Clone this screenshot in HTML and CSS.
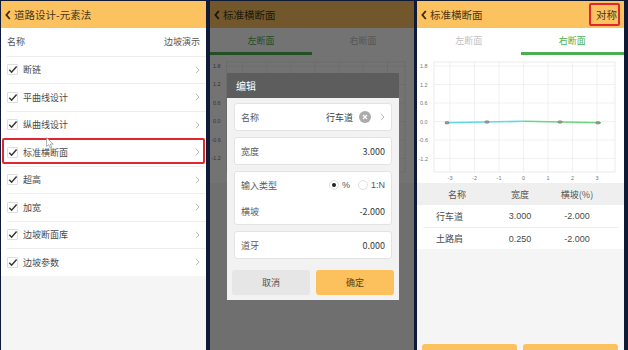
FILE: index.html
```html
<!DOCTYPE html>
<html lang="zh-CN">
<head>
<meta charset="utf-8">
<title>标准横断面</title>
<link rel="stylesheet" href="styles.css">
</head>
<body>
<main class="screens">
  <!-- Screen 1 -->
  <section class="panel p1">
    <header class="bar">
      <svg class="back" viewBox="0 0 6 10"><path d="M4.8 1 L1.4 5 L4.8 9"/></svg>
      <span>道路设计-元素法</span>
    </header>
    <ul class="list">
      <li class="row head"><span>名称</span><span>边坡演示</span></li>
      <li class="row item"><span class="cb"><svg viewBox="0 0 11 11"><path d="M2.3 5.8 L4.6 8.2 L9.6 2.4"/></svg></span><span class="lbl">断链</span><svg class="chev" viewBox="0 0 5 8"><path d="M1 0.8 L4 4 L1 7.2"/></svg></li>
      <li class="row item"><span class="cb"><svg viewBox="0 0 11 11"><path d="M2.3 5.8 L4.6 8.2 L9.6 2.4"/></svg></span><span class="lbl">平曲线设计</span><svg class="chev" viewBox="0 0 5 8"><path d="M1 0.8 L4 4 L1 7.2"/></svg></li>
      <li class="row item"><span class="cb"><svg viewBox="0 0 11 11"><path d="M2.3 5.8 L4.6 8.2 L9.6 2.4"/></svg></span><span class="lbl">纵曲线设计</span><svg class="chev" viewBox="0 0 5 8"><path d="M1 0.8 L4 4 L1 7.2"/></svg></li>
      <li class="row item hl"><span class="cb"><svg viewBox="0 0 11 11"><path d="M2.3 5.8 L4.6 8.2 L9.6 2.4"/></svg></span><span class="lbl">标准横断面</span><svg class="chev" viewBox="0 0 5 8"><path d="M1 0.8 L4 4 L1 7.2"/></svg></li>
      <li class="row item"><span class="cb"><svg viewBox="0 0 11 11"><path d="M2.3 5.8 L4.6 8.2 L9.6 2.4"/></svg></span><span class="lbl">超高</span><svg class="chev" viewBox="0 0 5 8"><path d="M1 0.8 L4 4 L1 7.2"/></svg></li>
      <li class="row item"><span class="cb"><svg viewBox="0 0 11 11"><path d="M2.3 5.8 L4.6 8.2 L9.6 2.4"/></svg></span><span class="lbl">加宽</span><svg class="chev" viewBox="0 0 5 8"><path d="M1 0.8 L4 4 L1 7.2"/></svg></li>
      <li class="row item"><span class="cb"><svg viewBox="0 0 11 11"><path d="M2.3 5.8 L4.6 8.2 L9.6 2.4"/></svg></span><span class="lbl">边坡断面库</span><svg class="chev" viewBox="0 0 5 8"><path d="M1 0.8 L4 4 L1 7.2"/></svg></li>
      <li class="row item"><span class="cb"><svg viewBox="0 0 11 11"><path d="M2.3 5.8 L4.6 8.2 L9.6 2.4"/></svg></span><span class="lbl">边坡参数</span><svg class="chev" viewBox="0 0 5 8"><path d="M1 0.8 L4 4 L1 7.2"/></svg></li>
    </ul>
    <svg class="cursor" viewBox="0 0 8 12"><path d="M0.6 0.6 L0.6 9.6 L2.8 7.6 L4.4 11 L5.8 10.4 L4.3 7.1 L7.2 7.1 Z"/></svg>
  </section>

  <!-- Screen 2 -->
  <section class="panel p2">
    <header class="bar">
      <svg class="back" viewBox="0 0 6 10"><path d="M4.8 1 L1.4 5 L4.8 9"/></svg>
      <span>标准横断面</span>
    </header>
    <div class="tabs"><span class="tab on">左断面</span><span class="tab">右断面</span></div>
    <div class="chart">
      <svg viewBox="0 0 207 127" preserveAspectRatio="none">
        <rect x="17" y="6" width="181" height="110" fill="#fff" stroke="#e3e3e3" stroke-width="0.7"/>
        <g stroke="#e8e8e8" stroke-width="0.6">
          <line x1="17" x2="198" y1="10" y2="10"/><line x1="17" x2="198" y1="28.5" y2="28.5"/><line x1="17" x2="198" y1="47" y2="47"/><line x1="17" x2="198" y1="65.5" y2="65.5"/><line x1="17" x2="198" y1="84" y2="84"/><line x1="17" x2="198" y1="102.5" y2="102.5"/>
          <line x1="33" x2="33" y1="6" y2="116"/><line x1="57.5" x2="57.5" y1="6" y2="116"/><line x1="82" x2="82" y1="6" y2="116"/><line x1="106.5" x2="106.5" y1="6" y2="116"/><line x1="131" x2="131" y1="6" y2="116"/><line x1="155.5" x2="155.5" y1="6" y2="116"/><line x1="180" x2="180" y1="6" y2="116"/>
        </g>
        <g font-size="5.5" fill="#777">
          <text x="3" y="12">1.8</text><text x="3" y="30.5">1.2</text><text x="3" y="49">0.6</text><text x="3" y="67.5">0.0</text><text x="1.5" y="86">-0.6</text><text x="1.5" y="104.5">-1.2</text>
        </g>
      </svg>
    </div>
    <div class="dim"></div>
    <div class="dialog">
      <div class="dlg-title">编辑</div>
      <div class="dlg-body">
        <div class="card">
          <div class="field"><span class="k">名称</span><span class="v">行车道</span>
            <svg class="clear" viewBox="0 0 12 12"><circle cx="6" cy="6" r="6" fill="#ababab"/><path d="M4 4 L8 8 M8 4 L4 8" stroke="#fff" stroke-width="1.2"/></svg>
            <svg class="chev dchev" viewBox="0 0 5 8"><path d="M1 0.8 L4 4 L1 7.2"/></svg>
          </div>
        </div>
        <div class="card"><div class="field"><span class="k">宽度</span><span class="v">3.000</span></div></div>
        <div class="card">
          <div class="field"><span class="k">输入类型</span>
            <span class="radios">
              <span class="radio"><span class="dot on"></span>%</span>
              <span class="radio"><span class="dot"></span>1:N</span>
            </span>
          </div>
          <div class="field"><span class="k">横坡</span><span class="v">-2.000</span></div>
        </div>
        <div class="card"><div class="field"><span class="k">道牙</span><span class="v">0.000</span></div></div>
        <div class="btns"><button class="btn cancel">取消</button><button class="btn ok">确定</button></div>
      </div>
    </div>
  </section>

  <!-- Screen 3 -->
  <section class="panel p3">
    <header class="bar">
      <svg class="back" viewBox="0 0 6 10"><path d="M4.8 1 L1.4 5 L4.8 9"/></svg>
      <span>标准横断面</span>
      <span class="sym">对称</span>
    </header>
    <div class="tabs"><span class="tab off">左断面</span><span class="tab on">右断面</span></div>
    <div class="chart">
      <svg viewBox="0 0 207 127">
        <rect x="17" y="6" width="181" height="110" fill="#fff" stroke="#e3e3e3" stroke-width="0.7"/>
        <g stroke="#e8e8e8" stroke-width="0.6">
          <line x1="17" x2="198" y1="10" y2="10"/><line x1="17" x2="198" y1="28.5" y2="28.5"/><line x1="17" x2="198" y1="47" y2="47"/><line x1="17" x2="198" y1="65.5" y2="65.5"/><line x1="17" x2="198" y1="84" y2="84"/><line x1="17" x2="198" y1="102.5" y2="102.5"/>
          <line x1="33" x2="33" y1="6" y2="116"/><line x1="57.5" x2="57.5" y1="6" y2="116"/><line x1="82" x2="82" y1="6" y2="116"/><line x1="106.5" x2="106.5" y1="6" y2="116"/><line x1="131" x2="131" y1="6" y2="116"/><line x1="155.5" x2="155.5" y1="6" y2="116"/><line x1="180" x2="180" y1="6" y2="116"/>
        </g>
        <g font-size="5.5" fill="#777">
          <text x="3" y="12">1.8</text><text x="3" y="30.5">1.2</text><text x="3" y="49">0.6</text><text x="3" y="67.5">0.0</text><text x="1.5" y="86">-0.6</text><text x="1.5" y="104.5">-1.2</text>
        </g>
        <g font-size="5.5" fill="#777" text-anchor="middle">
          <text x="33" y="124">-3</text><text x="57.5" y="124">-2</text><text x="82" y="124">-1</text><text x="106.5" y="124">0</text><text x="131" y="124">1</text><text x="155.5" y="124">2</text><text x="180" y="124">3</text>
        </g>
        <path d="M28 66.8 L106.5 65.3" stroke="#5fd8ea" stroke-width="1.6" fill="none"/>
        <path d="M106.5 65.3 L184 66.8" stroke="#6fd37f" stroke-width="1.6" fill="none"/>
        <g fill="#9a9a9a" stroke="#666" stroke-width="0.4">
          <rect x="28" y="65.6" width="4" height="2.4" rx="1"/>
          <rect x="68" y="64.8" width="4" height="2.4" rx="1"/>
          <rect x="141" y="64.8" width="4" height="2.4" rx="1"/>
          <rect x="179" y="65.6" width="4" height="2.4" rx="1"/>
        </g>
      </svg>
    </div>
    <div class="table">
      <div class="tr th"><span>名称</span><span>宽度</span><span>横坡(%)</span></div>
      <div class="tr"><span class="nm">行车道</span><span>3.000</span><span>-2.000</span></div>
      <div class="tr sep"><span class="nm">土路肩</span><span>0.250</span><span>-2.000</span></div>
    </div>
    <div class="spacer"></div>
    <div class="foot"><span class="fbtn"></span><span class="fbtn"></span></div>
  </section>
</main>
</body>
</html>
```

FILE: styles.css
```css
* { box-sizing: border-box; margin: 0; padding: 0; }
html, body { width: 628px; height: 350px; overflow: hidden; }
body {
  background: #0f1a36;
  font-family: "Noto Sans CJK SC", "Noto Sans", "Liberation Sans", sans-serif;
  color: #444;
}
.screens {
  display: flex;
  gap: 3px;
  padding: 1px 0 0 1px;
  height: 350px;
}
.panel {
  position: relative;
  display: flex;
  flex-direction: column;
  overflow: hidden;
  background: #f6f5f6;
  height: 349px;
}
.p1 { width: 205px; margin-right: 1px; }
.p2 { width: 204px; }
.p3 { width: 207px; }

/* header bar */
.bar {
  height: 27px;
  flex: none;
  background: #fbc25f;
  display: flex;
  align-items: center;
  gap: 3px;
  padding: 0 5px 0 4px;
  font-size: 10.5px;
  color: #4a3717;
}
.back {
  width: 6px;
  height: 10px;
  fill: none;
  stroke: #3d2c10;
  stroke-width: 1.8;
}
.sym {
  margin-left: auto;
  margin-right: 2px;
  position: relative;
  line-height: 14px;
}
.sym::after {
  content: "";
  position: absolute;
  left: -7px;
  right: -3px;
  top: -5px;
  bottom: -4px;
  border: 2px solid #e0262f;
  border-radius: 2px;
}

/* list (screen 1) */
.list { list-style: none; background: #fff; }
.row {
  height: 27.5px;
  display: flex;
  align-items: center;
  font-size: 9px;
  position: relative;
}
.row.head {
  justify-content: space-between;
  padding: 0 6px;
  color: #555;
}
.row.item {
  margin-left: 6px;
  padding-right: 6px;
  border-top: 1px solid #ededed;
}
.cb {
  width: 11px;
  height: 11px;
  border: 1px solid #dedede;
  border-radius: 1px;
  background: #fff;
  display: flex;
  margin-right: 5px;
}
.cb svg { width: 11px; height: 11px; margin: -1px; fill: none; stroke: #383838; stroke-width: 1.5; }
.lbl { flex: 1; color: #4a4a4a; }
.chev {
  width: 5px;
  height: 8px;
  fill: none;
  stroke: #b8b8b8;
  stroke-width: 1;
}
.row.hl::after {
  content: "";
  position: absolute;
  left: -5px;
  right: 1px;
  top: -1px;
  bottom: 1.5px;
  border: 2px solid #e0262f;
  border-radius: 2px;
}
.cursor {
  position: absolute;
  left: 45px;
  top: 136px;
  width: 8px;
  height: 12px;
  fill: #fff;
  stroke: #8a8a8a;
  stroke-width: 0.7;
}

/* tabs */
.tabs {
  height: 28px;
  flex: none;
  display: flex;
  background: #fff;
  padding-bottom: 1px;
}
.tab {
  flex: 1;
  display: flex;
  align-items: center;
  justify-content: center;
  font-size: 9px;
  color: #c2c2c2;
  border-bottom: 3px solid transparent;
}
.tab.on { color: #4caf50; border-bottom-color: #4caf50; }

/* chart */
.chart { height: 127px; flex: none; background: #fff; }
.chart svg { display: block; width: 100%; height: 127px; font-family: "Liberation Sans", sans-serif; }

/* table */
.table { background: #fff; font-size: 9px; }
.tr {
  height: 22px;
  display: grid;
  grid-template-columns: 80px 46px 68px;
  align-items: center;
  text-align: center;
  color: #4a4a4a;
}
.tr.th { background: #efefef; color: #555; }
.tr .nm { text-align: left; padding-left: 19px; }
.tr span:not(.nm) { font-family: "Liberation Sans", sans-serif; }
.tr.th span { font-family: "Noto Sans CJK SC", sans-serif; }
.tr.sep { border-top: 1px solid #ededed; margin: 0 6px; grid-template-columns: 74px 46px 68px; }
.tr.sep .nm { padding-left: 13px; }
.spacer { flex: 1; }
.foot {
  height: 6px;
  flex: none;
  display: flex;
  gap: 6px;
  padding: 0 6px 0 5px;
}
.fbtn { flex: 1; background: #fbc25f; border-radius: 3px 3px 0 0; }

/* overlay + dialog (screen 2) */
.dim {
  position: absolute;
  inset: 0;
  background: rgba(0, 0, 0, 0.55);
}
.dialog {
  position: absolute;
  left: 17px;
  top: 72px;
  width: 172px;
}
.dlg-title {
  height: 25px;
  background: #5d5d5d;
  color: #fff;
  font-size: 10px;
  display: flex;
  align-items: center;
  padding-left: 9px;
}
.dlg-body {
  background: #f2f2f2;
  padding: 5px 7px 5px;
  display: flex;
  flex-direction: column;
  gap: 6px;
}
.card {
  background: #fff;
  border: 1px solid #e3e3e3;
  border-radius: 3px;
}
.field {
  height: 26px;
  display: flex;
  align-items: center;
  padding: 0 6px;
  font-size: 9px;
}
.k { color: #5a5a5a; }
.v {
  margin-left: auto;
  color: #3a3a3a;
  font-size: 10px;
}
.field .v:not(:only-child) { font-size: 9px; }
.clear { width: 12px; height: 12px; margin-left: 6px; }
.dchev { margin-left: 9px; }
.radios {
  margin-left: auto;
  display: flex;
  gap: 8px;
  font-size: 9px;
  color: #555;
  font-family: "Liberation Sans", sans-serif;
}
.radio { display: flex; align-items: center; gap: 3px; }
.dot {
  width: 10px;
  height: 10px;
  border-radius: 50%;
  border: 1px solid #e0e0e0;
  background: #fff;
  display: flex;
  align-items: center;
  justify-content: center;
}
.dot.on::after {
  content: "";
  width: 4px;
  height: 4px;
  border-radius: 50%;
  background: #222;
}
.btns {
  display: flex;
  gap: 6px;
  margin: 5px -2px 0;
}
.btn {
  flex: 1;
  height: 25px;
  border: none;
  border-radius: 3px;
  font-family: inherit;
  font-size: 9px;
}
.btn.cancel { background: #e6e6e6; color: #555; }
.btn.ok { background: #fcc15d; color: #5a3f12; }
```
